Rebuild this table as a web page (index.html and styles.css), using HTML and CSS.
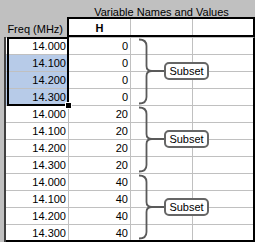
FILE: index.html
```
<!DOCTYPE html>
<html>
<head>
<meta charset="utf-8">
<link rel="stylesheet" href="styles.css">
</head>
<body>
<div class="sheet">
  <div class="title-row">Variable Names and Values</div>
  <div class="head-row">
    <div class="freq-head">Freq (MHz)</div>
    <div class="h-box">
      <div class="hcell w62 bold">H</div>
      <div class="hcell w62"></div>
      <div class="hcell w60 last"></div>
    </div>
  </div>
  <div class="body">
    <div class="strip"></div>
    <div class="grid">
      <div class="row"><div class="cell cf">14.000</div><div class="cell ch">0</div><div class="cell c3"></div><div class="cell c4"></div></div>
      <div class="row"><div class="cell cf sel">14.100</div><div class="cell ch">0</div><div class="cell c3"></div><div class="cell c4"></div></div>
      <div class="row"><div class="cell cf sel">14.200</div><div class="cell ch">0</div><div class="cell c3"></div><div class="cell c4"></div></div>
      <div class="row"><div class="cell cf sel">14.300</div><div class="cell ch">0</div><div class="cell c3"></div><div class="cell c4"></div></div>
      <div class="row"><div class="cell cf">14.000</div><div class="cell ch">20</div><div class="cell c3"></div><div class="cell c4"></div></div>
      <div class="row"><div class="cell cf">14.100</div><div class="cell ch">20</div><div class="cell c3"></div><div class="cell c4"></div></div>
      <div class="row"><div class="cell cf">14.200</div><div class="cell ch">20</div><div class="cell c3"></div><div class="cell c4"></div></div>
      <div class="row"><div class="cell cf">14.300</div><div class="cell ch">20</div><div class="cell c3"></div><div class="cell c4"></div></div>
      <div class="row"><div class="cell cf">14.000</div><div class="cell ch">40</div><div class="cell c3"></div><div class="cell c4"></div></div>
      <div class="row"><div class="cell cf">14.100</div><div class="cell ch">40</div><div class="cell c3"></div><div class="cell c4"></div></div>
      <div class="row"><div class="cell cf">14.200</div><div class="cell ch">40</div><div class="cell c3"></div><div class="cell c4"></div></div>
      <div class="row lastrow"><div class="cell cf">14.300</div><div class="cell ch">40</div><div class="cell c3"></div><div class="cell c4"></div></div>
    </div>
  </div>

  <div class="selection"></div>
  <div class="handle"></div>

  <svg class="braces" width="255" height="242" viewBox="0 0 255 242">
    <g fill="none" stroke="#5a5a5a" stroke-width="1.8">
      <path d="M139,39.5 Q146.5,39.5 146.5,46 L146.5,66 Q146.5,71 152,71 L164,71 M152,71 Q146.5,71 146.5,76 L146.5,97 Q146.5,103.5 139,103.5"/>
      <path d="M139,107.5 Q146.5,107.5 146.5,114 L146.5,134 Q146.5,139 152,139 L164,139 M152,139 Q146.5,139 146.5,144 L146.5,165 Q146.5,171.5 139,171.5"/>
      <path d="M139,175.5 Q146.5,175.5 146.5,182 L146.5,202 Q146.5,207 152,207 L164,207 M152,207 Q146.5,207 146.5,212 L146.5,232 Q146.5,238.5 139,238.5"/>
    </g>
  </svg>

  <div class="label l1">Subset</div>
  <div class="label l2">Subset</div>
  <div class="label l3">Subset</div>
</div>
</body>
</html>
```
FILE: styles.css
```
* { box-sizing: border-box; }
html, body { margin: 0; padding: 0; background: #c0c0c0; }
body { font-family: "Liberation Sans", Arial, sans-serif; font-size: 11px; color: #000; }

.sheet {
  position: relative;
  width: 255px;
  height: 242px;
  background: #c0c0c0;
  overflow: hidden;
}

.title-row {
  height: 17px;
  padding: 5px 0 0 68px;
  line-height: 14px;
  text-align: center;
  white-space: nowrap;
}

.head-row {
  display: flex;
  height: 20px;
}
.freq-head {
  width: 67px;
  padding: 4px 4px 0 0;
  line-height: 16px;
  text-align: right;
  white-space: nowrap;
}
.h-box {
  width: 188px;
  border: 2px solid #000;
  background: #fff;
  display: flex;
}
.hcell {
  height: 16px;
  padding-top: 3px;
  line-height: 13px;
  text-align: center;
  border-right: 1px solid #c0c0c0;
}
.hcell.last { border-right: none; }
.w62 { width: 62px; }
.w60 { width: 60px; }
.bold { font-weight: bold; }

.body {
  display: flex;
  height: 205px;
}
.strip {
  width: 6px;
  background: #c0c0c0;
  border-right: 2px solid #404040;
}
.grid {
  width: 249px;
  background: #fff;
  border-top: 1px solid #c0c0c0;
  border-right: 2px solid #000;
}
.row {
  display: flex;
  height: 17px;
  border-bottom: 1px solid #c0c0c0;
}
.row.lastrow { border-bottom: 2px solid #000; }
.cell {
  height: 100%;
  line-height: 16px;
  text-align: right;
  padding-right: 2px;
  white-space: nowrap;
  border-right: 1px solid #c0c0c0;
}
.cf { width: 63px; }
.ch { width: 62px; }
.c3 { width: 62px; }
.c4 { width: 60px; border-right: none; }
.cell.sel { background: #b7cbe8; }

.selection {
  position: absolute;
  left: 7px;
  top: 37px;
  width: 62px;
  height: 69px;
  border: 2px solid #000;
}
.handle {
  position: absolute;
  left: 65px;
  top: 102px;
  width: 7px;
  height: 7px;
  background: #000;
  border: 1px solid #fff;
}

.braces {
  position: absolute;
  left: 0;
  top: 0;
}

.label {
  position: absolute;
  left: 164px;
  width: 45px;
  height: 18px;
  border: 2px solid #666;
  border-radius: 5px;
  background: #fff;
  text-align: center;
  line-height: 14px;
  white-space: nowrap;
}
.l1 { top: 62px; }
.l2 { top: 130px; }
.l3 { top: 198px; }
```
